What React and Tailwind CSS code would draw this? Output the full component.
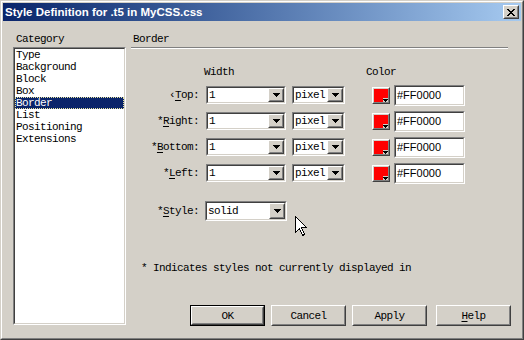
import React from "react";

// classic win2000 bevels
const raisedOuter = "border border-t-white border-l-white border-r-[#404040] border-b-[#404040]";
const raisedInner = "border border-t-[#d4d0c8] border-l-[#d4d0c8] border-r-[#808080] border-b-[#808080]";
const sunkenOuter = "border border-t-[#808080] border-l-[#808080] border-r-white border-b-white";
const sunkenInner = "border border-t-[#404040] border-l-[#404040] border-r-[#d4d0c8] border-b-[#d4d0c8]";

function Arrow() {
  return (
    <svg width="7" height="4" viewBox="0 0 7 4" shapeRendering="crispEdges">
      <path d="M0 0h7v1H0zM1 1h5v1H1zM2 2h3v1H2zM3 3h1v1H3z" fill="#000" />
    </svg>
  );
}

function Select({ className, value }) {
  return (
    <div className={`flex ${sunkenOuter} ${className}`}>
      <div className={`flex flex-1 items-stretch bg-white ${sunkenInner}`}>
        <span className="flex flex-1 items-center pl-px">{value}</span>
        <div className={`w-[16px] ${raisedOuter}`}>
          <div className={`flex h-full items-center justify-center bg-[#d4d0c8] ${raisedInner}`}>
            <Arrow />
          </div>
        </div>
      </div>
    </div>
  );
}

function ColorButton() {
  return (
    <div className={`h-[17px] w-[18px] ${raisedOuter}`}>
      <div className={`flex h-full items-center justify-center bg-[#d4d0c8] ${raisedInner}`}>
        <svg width="14" height="13" viewBox="0 0 14 13" shapeRendering="crispEdges">
          <path d="M0 0h14v9H9v4H0z" fill="#ff0000" />
          <path d="M9 10h5v1H9zM10 11h3v1h-3zM11 12h1v1h-1z" fill="#000" />
        </svg>
      </div>
    </div>
  );
}

function HexBox() {
  return (
    <div className={`flex h-[21px] w-[71px] ${sunkenOuter}`}>
      <div className={`flex flex-1 items-center bg-white pl-px font-['Liberation_Sans',sans-serif] text-[11px] tracking-normal text-black ${sunkenInner}`}>
        #FF0000
      </div>
    </div>
  );
}

function Button({ children, isDefault }) {
  const btn = (
    <div className={`h-full w-full ${raisedOuter}`}>
      <div className={`flex h-full items-center justify-center bg-[#d4d0c8] ${raisedInner}`}>{children}</div>
    </div>
  );
  if (isDefault) {
    return <div className="h-[21px] w-[75px] border border-black">{btn}</div>;
  }
  return <div className="h-[21px] w-[75px]">{btn}</div>;
}

function BorderRow({ prefix, hot, rest }) {
  return (
    <div className="flex h-[26px] items-center">
      <div className="w-[68px] text-right">
        {prefix}
        <span className="underline underline-offset-2">{hot}</span>
        {rest}
      </div>
      <Select className="ml-[7px] h-[18px] w-[80px]" value="1" />
      <Select className="ml-[6px] h-[18px] w-[53px]" value="pixel" />
      <div className="ml-[27px]">
        <ColorButton />
      </div>
      <div className="ml-[4px]">
        <HexBox />
      </div>
    </div>
  );
}

const categories = ["Type", "Background", "Block", "Box", "Border", "List", "Positioning", "Extensions"];

export default function App() {
  return (
    <div className="relative h-[340px] w-[524px] overflow-hidden border border-t-[#d4d0c8] border-l-[#d4d0c8] border-r-[#404040] border-b-[#404040] bg-[#d4d0c8] font-['Liberation_Mono',monospace] text-[11px] leading-[12px] tracking-[-0.6px] text-black">
      <div className="flex h-full flex-col border border-t-white border-l-white border-r-[#808080] border-b-[#808080] p-px">
        {/* title bar */}
        <div className="flex h-[18px] shrink-0 items-center bg-gradient-to-r from-[#0a246a] to-[#a6caf0] pl-[2px] pr-[2px]">
          <span className="flex-1 font-['Liberation_Sans',sans-serif] text-[11.5px] font-bold tracking-normal text-white">
            Style Definition for .t5 in MyCSS.css
          </span>
          <div className={`h-[14px] w-[16px] ${raisedOuter}`}>
            <div className={`flex h-full items-center justify-center bg-[#d4d0c8] ${raisedInner}`}>
              <svg width="8" height="7" viewBox="0 0 8 7" shapeRendering="crispEdges">
                <path d="M0 0h2v1H0zM6 0h2v1H6zM1 1h2v1H1zM5 1h2v1H5zM2 2h4v1H2zM3 3h2v1H3zM2 4h4v1H2zM1 5h2v1H1zM5 5h2v1H5zM0 6h2v1H0zM6 6h2v1H6z" fill="#000" />
              </svg>
            </div>
          </div>
        </div>

        {/* body */}
        <div className="flex flex-1 pl-[10px] pr-[8px]">
          <div className="flex w-[113px] flex-col pt-[12px]">
            <div className="mb-[2px] pl-[3px]">Category</div>
            <div className={`h-[278px] ${sunkenOuter}`}>
              <div className={`h-full bg-white ${sunkenInner}`}>
                {categories.map((c) =>
                  c === "Border" ? (
                    <div key={c} className="h-[12px] border border-dotted border-[#e8e4a0] bg-[#0a246a] text-white">
                      <span className="-mt-px block">{c}</span>
                    </div>
                  ) : (
                    <div key={c} className="h-[12px] pl-px">
                      {c}
                    </div>
                  )
                )}
              </div>
            </div>
          </div>

          <div className="ml-[5px] flex w-[380px] flex-col pt-[12px]">
            <div className="pl-[2px]">Border</div>
            <div className="mr-[3px] mt-[2px] h-[2px] border-t border-b border-t-[#808080] border-b-white" />

            <div className="mt-[17px] flex">
              <span className="ml-[73px] w-[162px]">Width</span>
              <span>Color</span>
            </div>

            <div className="mt-[4px] flex flex-col">
              <BorderRow prefix="‹" hot="T" rest="op:" />
              <BorderRow prefix="*" hot="R" rest="ight:" />
              <BorderRow prefix="*" hot="B" rest="ottom:" />
              <BorderRow prefix="*" hot="L" rest="eft:" />
            </div>

            <div className="mt-[15px] flex h-[20px] items-center">
              <div className="w-[68px] text-right">
                *<span className="underline underline-offset-2">S</span>tyle:
              </div>
              <Select className="ml-[6px] h-[20px] w-[82px]" value="solid" />
            </div>

            <div className="mt-[41px] pl-[10px]">* Indicates styles not currently displayed in</div>

            <div className="mt-[31px] flex justify-end">
              <Button isDefault>OK</Button>
              <div className="ml-[6px]">
                <Button>Cancel</Button>
              </div>
              <div className="ml-[6px]">
                <Button>Apply</Button>
              </div>
              <div className="ml-[9px]">
                <Button>
                  <span className="underline underline-offset-2">H</span>elp
                </Button>
              </div>
            </div>
          </div>
        </div>
      </div>

      {/* mouse pointer */}
      <svg className="absolute left-[294px] top-[215px]" width="13" height="21" viewBox="0 0 13 21" shapeRendering="crispEdges">
        <path d="M0.5 0.5V16.5L4.5 12.5L7.5 19.5L9.5 18.5L6.5 11.5H11.5Z" fill="#fff" stroke="#000" strokeWidth="1" />
      </svg>
    </div>
  );
}
